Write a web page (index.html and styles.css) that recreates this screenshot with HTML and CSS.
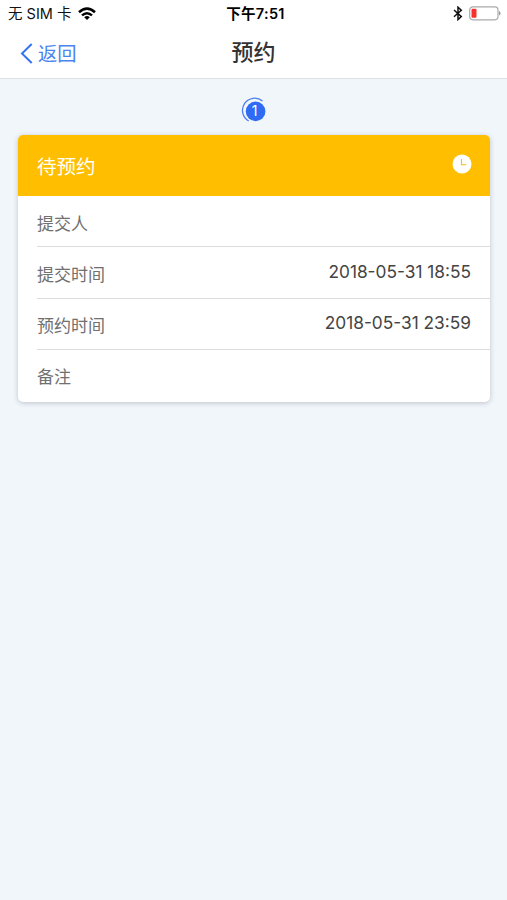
FILE: index.html
```html
<!DOCTYPE html>
<html lang="zh-CN">
<head>
<meta charset="utf-8">
<title>预约</title>
<link rel="stylesheet" href="styles.css">
</head>
<body>
<header class="top">
  <div class="status">
    <div class="carrier"><span>无 SIM 卡</span>
      <svg class="wifi" width="18" height="14" viewBox="0 0 18 14" fill="none" stroke="#000" stroke-width="2.5"><path d="M1 5.2Q9-1.9 17 5.2M4 8.4Q9 4 14 8.4"/><path d="M6.2 10.2Q9 8 11.8 10.2L9 13Z" fill="#000" stroke="none"/></svg>
    </div>
    <div class="clock">下午7:51</div>
    <div class="power">
      <svg width="10" height="15" viewBox="0 0 10 15" fill="none" stroke="#111" stroke-width="1.5"><path d="M1 4L8.3 10.6L5 13.6V1.2L8.3 4.2L1 10.8"/></svg>
      <svg width="32" height="15" viewBox="0 0 32 15"><rect x=".7" y=".8" width="28.3" height="13" rx="3.2" fill="#fff" stroke="#aaa" stroke-width="1.2"/><rect x="2.5" y="2.8" width="5" height="9" rx="1" fill="#f8302b"/><path d="M30 5Q31.5 5.5 31.5 7.2T30 9.6Z" fill="#999"/></svg>
    </div>
  </div>
  <nav class="nav">
    <a class="back"><svg width="13" height="21" viewBox="0 0 13 21" fill="none" stroke="#3474ef" stroke-width="2"><path d="M11.7 1L2 10.5L11.7 20"/></svg><span>返回</span></a>
    <h1>预约</h1>
  </nav>
</header>
<main>
  <div class="step">
    <svg width="26" height="26" viewBox="0 0 26 26" fill="none" stroke="#4b7ef0" stroke-width="1.3"><circle cx="13.6" cy="13.4" r="9.8" fill="#306bf3" stroke="none"/><path d="M20.5 3A12.2 12.2 0 1 0 6.7 23"/></svg>
    <span>1</span>
  </div>
  <section class="card">
    <div class="card-head"><span>待预约</span>
      <svg width="20" height="20" viewBox="0 0 20 20"><circle cx="10" cy="10" r="9.5" fill="#fff"/><path d="M9.5 5V10.7H14.2" fill="none" stroke="#ffbf00" stroke-width="1.1"/></svg>
    </div>
    <dl>
      <div class="row"><dt>提交人</dt><dd></dd></div>
      <div class="row"><dt>提交时间</dt><dd>2018-05-31 18:55</dd></div>
      <div class="row"><dt>预约时间</dt><dd>2018-05-31 23:59</dd></div>
      <div class="row"><dt>备注</dt><dd></dd></div>
    </dl>
  </section>
</main>
</body>
</html>
```
FILE: styles.css
```css
* { box-sizing: border-box; }
body {
  margin: 0;
  min-height: 900px;
  background: #f0f6fa;
  font-family: Inter, "Noto Sans CJK SC", sans-serif;
  color: #333;
}
.top {
  height: 79px;
  background: #fff;
  border-bottom: 1px solid #dce0e3;
}
.status {
  height: 27px;
  display: grid;
  grid-template-columns: 1fr auto 1fr;
  align-items: center;
  padding: 0 6px 0 8px;
  font-size: 14.5px;
  line-height: 27px;
  color: #111;
}
.carrier, .power { display: flex; align-items: center; }
.carrier { gap: 7px; }
.power { justify-content: flex-end; gap: 6px; }
.clock { font-weight: 600; color: #000; letter-spacing: .3px; padding-left: 2px; }
.nav {
  height: 51px;
  display: grid;
  grid-template-columns: 1fr auto 1fr;
  align-items: center;
  padding: 0 20px;
}
.back {
  display: flex;
  align-items: center;
  gap: 5px;
  font-size: 19.3px;
  line-height: 28px;
  color: #4a84f1;
  padding-top: 1px;
}
.back span { padding-top: 1px; }
.nav h1 { margin: 0 0 2px; font-size: 22px; line-height: 32px; font-weight: 500; }
.step {
  position: relative;
  width: 26px;
  height: 26px;
  margin: 19px auto 11px;
  left: 1px;
}
.step svg { display: block; overflow: visible; }
.step span {
  position: absolute;
  inset: 0;
  text-align: center;
  font-size: 14px;
  line-height: 26px;
  color: #fff;
}
.card {
  margin: 0 17px 0 18px;
  height: 267px;
  background: #fff;
  border-radius: 5px;
  box-shadow: 0 1px 5px rgba(70, 80, 90, .3);
  overflow: hidden;
}
.card-head {
  height: 61px;
  display: flex;
  align-items: center;
  justify-content: space-between;
  padding: 0 18px 0 19px;
  background: #ffbf00;
  color: #fff;
  font-size: 19.5px;
}
.card-head svg { margin-bottom: 4px; }
dl { margin: 0 0 0 19px; }
.row {
  height: 51.4px;
  display: flex;
  justify-content: space-between;
  align-items: center;
  padding-right: 19px;
  border-bottom: 1px solid #dcdcdc;
}
.row:last-child { border-bottom: 0; }
dt { font-size: 17px; line-height: 24px; color: #707070; padding-top: 5px; }
.row:last-child dt { padding-top: 3px; }
dd { margin: 0 0 2px; font-size: 17.3px; line-height: 24px; color: #444; }
```
